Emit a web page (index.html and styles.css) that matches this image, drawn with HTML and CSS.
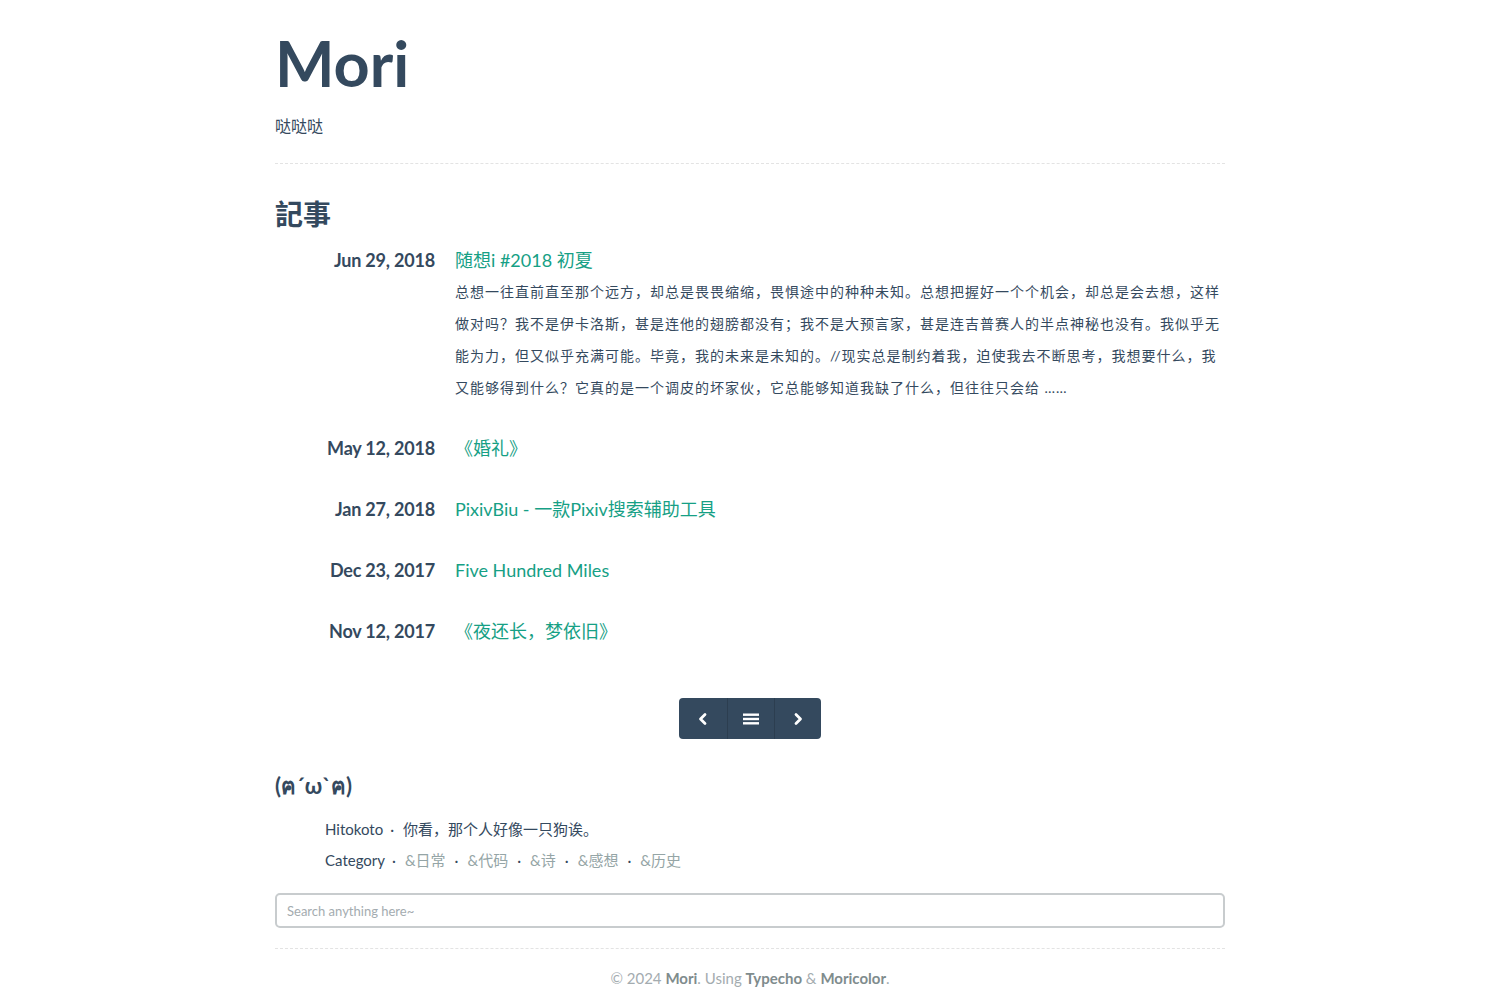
FILE: index.html
```html
<!DOCTYPE html>
<html lang="zh">
<head>
<meta charset="utf-8">
<title>Mori</title>
<link rel="stylesheet" href="styles.css">
</head>
<body>
<div class="wrap">
  <header class="site-head">
    <h1 class="site-title">Mori</h1>
    <p class="site-desc">哒哒哒</p>
  </header>

  <section class="posts">
    <h2 class="section-title">記事</h2>
    <div class="post">
      <div class="post-date">Jun 29, 2018</div>
      <div class="post-body">
        <a class="post-title" href="#">随想i #2018 初夏</a>
        <p class="post-excerpt">总想一往直前直至那个远方，却总是畏畏缩缩，畏惧途中的种种未知。总想把握好一个个机会，却总是会去想，这样做对吗？我不是伊卡洛斯，甚是连他的翅膀都没有；我不是大预言家，甚是连吉普赛人的半点神秘也没有。我似乎无能为力，但又似乎充满可能。毕竟，我的未来是未知的。//现实总是制约着我，迫使我去不断思考，我想要什么，我又能够得到什么？它真的是一个调皮的坏家伙，它总能够知道我缺了什么，但往往只会给 ……</p>
      </div>
    </div>
    <div class="post">
      <div class="post-date">May 12, 2018</div>
      <div class="post-body"><a class="post-title" href="#">《婚礼》</a></div>
    </div>
    <div class="post">
      <div class="post-date">Jan 27, 2018</div>
      <div class="post-body"><a class="post-title" href="#">PixivBiu - 一款Pixiv搜索辅助工具</a></div>
    </div>
    <div class="post">
      <div class="post-date">Dec 23, 2017</div>
      <div class="post-body"><a class="post-title" href="#">Five Hundred Miles</a></div>
    </div>
    <div class="post">
      <div class="post-date">Nov 12, 2017</div>
      <div class="post-body"><a class="post-title" href="#">《夜还长，梦依旧》</a></div>
    </div>
  </section>

  <nav class="pager">
    <a class="pager-btn" href="#" aria-label="prev">
      <svg width="14" height="14" viewBox="0 0 14 14"><path d="M9 2.5 L4.5 7 L9 11.5" fill="none" stroke="#fff" stroke-width="2.8" stroke-linecap="round" stroke-linejoin="round"/></svg>
    </a>
    <a class="pager-btn" href="#" aria-label="list">
      <svg width="16" height="14" viewBox="0 0 16 14"><rect x="0" y="1.5" width="16" height="2.4" fill="#fff"/><rect x="0" y="5.8" width="16" height="2.4" fill="#fff"/><rect x="0" y="10.1" width="16" height="2.4" fill="#fff"/></svg>
    </a>
    <a class="pager-btn" href="#" aria-label="next">
      <svg width="14" height="14" viewBox="0 0 14 14"><path d="M5 2.5 L9.5 7 L5 11.5" fill="none" stroke="#fff" stroke-width="2.8" stroke-linecap="round" stroke-linejoin="round"/></svg>
    </a>
  </nav>

  <section class="misc">
    <h3 class="misc-title">(ฅ´ω`ฅ)</h3>
    <div class="misc-body">
      <p class="misc-line"><span class="label">Hitokoto</span><span class="dot">·</span><span>你看，那个人好像一只狗诶。</span></p>
      <p class="misc-line"><span class="label">Category</span><span class="dot">·</span><a class="cat" href="#">&amp;日常</a><span class="dot">·</span><a class="cat" href="#">&amp;代码</a><span class="dot">·</span><a class="cat" href="#">&amp;诗</a><span class="dot">·</span><a class="cat" href="#">&amp;感想</a><span class="dot">·</span><a class="cat" href="#">&amp;历史</a></p>
    </div>
    <input class="search" type="text" placeholder="Search anything here~">
  </section>

  <footer class="site-foot">
    © 2024 <a href="#">Mori</a>. Using <a href="#">Typecho</a> &amp; <a href="#">Moricolor</a>.
  </footer>
</div>
</body>
</html>
```

FILE: styles.css
```css
* { box-sizing: border-box; }
html, body { margin: 0; padding: 0; background: #fff; }
body {
  font-family: Lato, "Noto Sans CJK SC", sans-serif;
  color: #34495e;
}
a { text-decoration: none; }

.wrap {
  width: 950px;
  margin: 0 auto;
}

.site-head {
  padding-top: 22px;
  padding-bottom: 25px;
  border-bottom: 1px dashed #e3e3e3;
}
.site-title {
  margin: 0;
  font-size: 63px;
  font-weight: 700;
  line-height: 82px;
  color: #34495e;
}
.site-desc {
  margin: 10px 0 0;
  font-size: 16px;
  line-height: 24px;
  color: #34495e;
}

.posts { padding-top: 30px; }
.section-title {
  margin: 0 0 12px;
  font-size: 28px;
  line-height: 40px;
  font-weight: 700;
}
.post {
  display: flex;
  gap: 20px;
  margin-bottom: 33px;
}
.post-date {
  width: 160px;
  flex: none;
  text-align: right;
  font-size: 18px;
  font-weight: 700;
  line-height: 28px;
  letter-spacing: -0.2px;
}
.post-body { flex: 1; }
.post-title {
  display: block;
  color: #16a085;
  font-size: 18px;
  line-height: 28px;
}
.post-excerpt {
  margin: 2px 0 -3px;
  font-size: 14px;
  letter-spacing: 1px;
  line-height: 32px;
  color: #34495e;
}

.pager {
  display: flex;
  justify-content: center;
  margin-top: 53px;
}
.pager-btn {
  width: 47px;
  height: 41px;
  background: #34495e;
  display: flex;
  align-items: center;
  justify-content: center;
  border-left: 1px solid #2c3e50;
}
.pager-btn:first-child { border-radius: 4px 0 0 4px; border-left: 0; width: 48px; }
.pager-btn:last-child { border-radius: 0 4px 4px 0; }

.misc { margin-top: 32px; }
.misc-title {
  margin: 0 0 17px;
  font-size: 22px;
  line-height: 30px;
  font-weight: 700;
}
.misc-body { padding-left: 50px; }
.misc-line {
  margin: 0 0 9px;
  font-size: 15px;
  line-height: 22px;
  color: #34495e;
}
.dot { margin: 0 9px 0 7px; }
.cat { color: #95a5a6; }
.cat + .dot { margin: 0 9px; }
.search {
  display: block;
  width: 100%;
  height: 35px;
  margin-top: 22px;
  padding: 0 10px;
  border: 2px solid #c8ccce;
  border-radius: 5px;
  font-family: Lato, sans-serif;
  font-size: 13px;
  color: #34495e;
  outline: none;
}
.search::placeholder { color: #a4acb0; }

.site-foot {
  margin-top: 20px;
  border-top: 1px dashed #e3e3e3;
  padding: 20px 0 10px;
  text-align: center;
  font-size: 15px;
  color: #a4acb0;
}
.site-foot a { color: #7f8c8d; font-weight: 700; }
```
